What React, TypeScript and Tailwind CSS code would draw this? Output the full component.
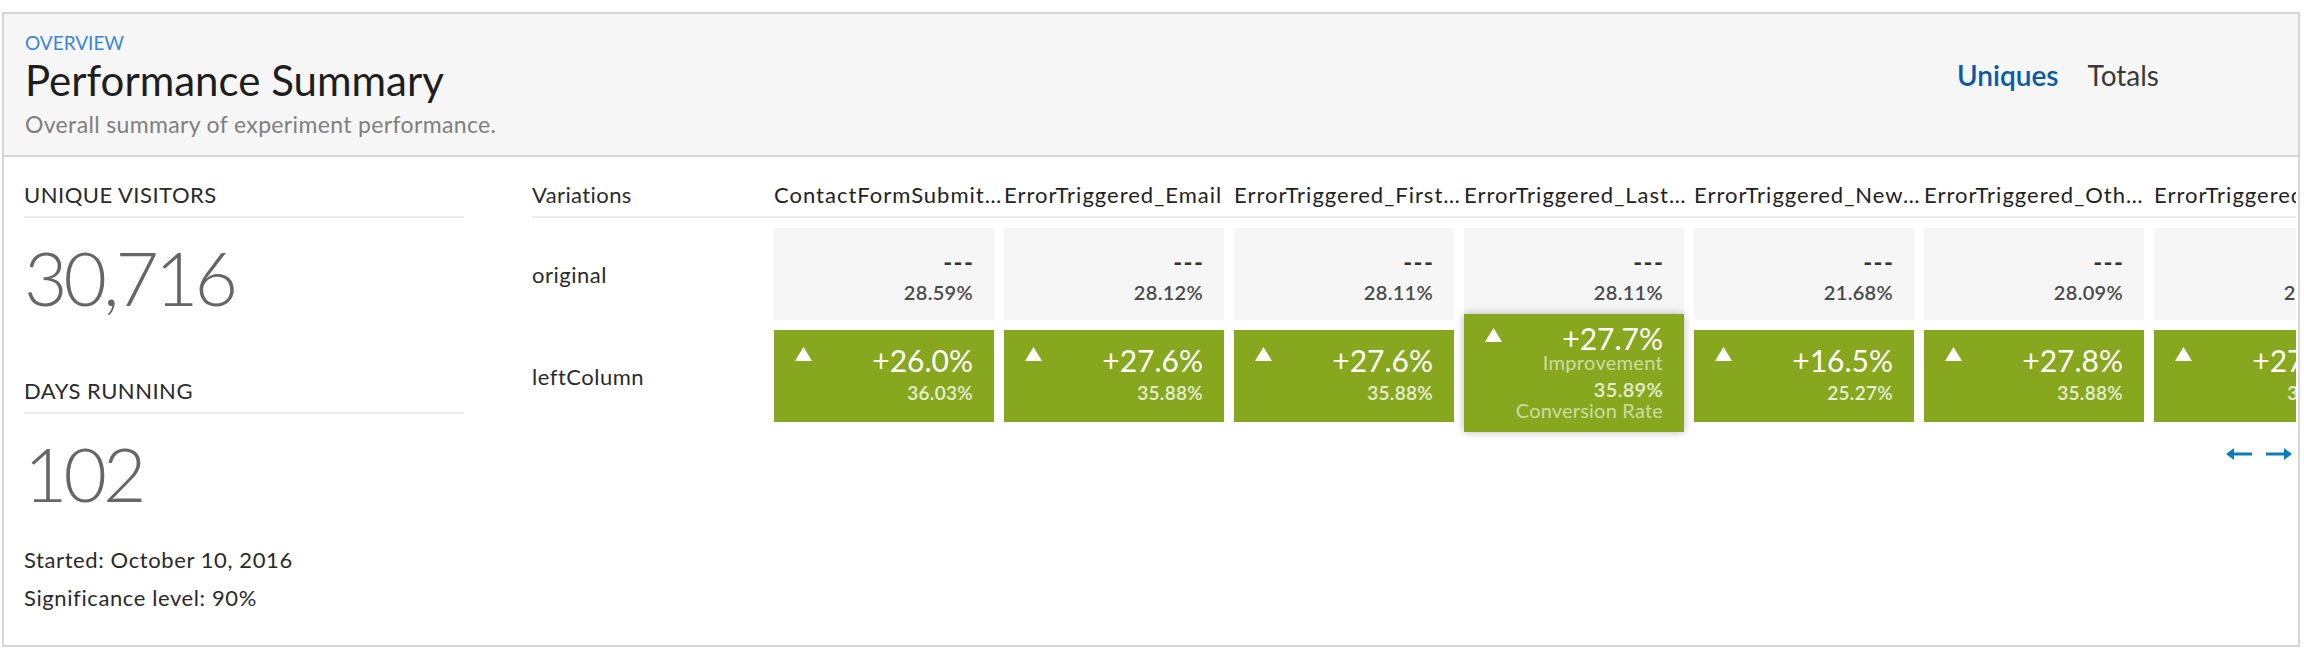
import React from 'react';

type Column = {
  name: string;
  base: string;
  lift: string;
  rate: string;
  hover?: boolean;
};

const columns: Column[] = [
  { name: 'ContactFormSubmit…', base: '28.59%', lift: '+26.0%', rate: '36.03%' },
  { name: 'ErrorTriggered_Email', base: '28.12%', lift: '+27.6%', rate: '35.88%' },
  { name: 'ErrorTriggered_First…', base: '28.11%', lift: '+27.6%', rate: '35.88%' },
  { name: 'ErrorTriggered_Last…', base: '28.11%', lift: '+27.7%', rate: '35.89%', hover: true },
  { name: 'ErrorTriggered_New…', base: '21.68%', lift: '+16.5%', rate: '25.27%' },
  { name: 'ErrorTriggered_Oth…', base: '28.09%', lift: '+27.8%', rate: '35.88%' },
  { name: 'ErrorTriggered_Phone', base: '28.10%', lift: '+27.9%', rate: '35.91%' },
];

const UpTriangle = ({ className = '' }: { className?: string }) => (
  <svg width="17" height="14" viewBox="0 0 17 14" className={`shrink-0 ${className}`}>
    <path d="M8.5 0 L17 14 H0 Z" fill="#ffffff" />
  </svg>
);

const ArrowLeft = () => (
  <svg width="26" height="14" viewBox="0 0 26 14">
    <path d="M0 7 L8 1 V5.5 H26 V8.5 H8 V13 Z" fill="#0b7dbd" />
  </svg>
);

const ArrowRight = () => (
  <svg width="26" height="14" viewBox="0 0 26 14">
    <path d="M26 7 L18 1 V5.5 H0 V8.5 H18 V13 Z" fill="#0b7dbd" />
  </svg>
);

const BaseCell = ({ value }: { value: string }) => (
  <div className="w-[220px] h-[92px] shrink-0 bg-[#f6f6f6] flex flex-col items-end pr-[21px] pt-[22px]">
    <div className="text-[24px] leading-[24px] font-bold text-[#333] tracking-[1.5px] -mr-[1.5px]">---</div>
    <div className="mt-[8px] text-[20px] leading-[20px] font-semibold text-[#4a4a4a] tracking-[0.3px]">{value}</div>
  </div>
);

const LiftCell = ({ col }: { col: Column }) => {
  if (col.hover) {
    return (
      <div className="relative w-[220px] h-[92px] shrink-0">
        {/* hovered card grows over the row and shows labels */}
        <div className="absolute -top-[16px] -bottom-[10px] left-0 right-0 z-10 bg-[#87a81e] shadow-[0_0_8px_rgba(0,0,0,0.28)] flex justify-between pl-[21px] pr-[21px] pt-[9px]">
          <UpTriangle className="mt-[5px]" />
          <div className="flex flex-col items-end">
            <div className="text-[30px] leading-[30px] text-white">{col.lift}</div>
            <div className="text-[20px] leading-[18px] text-white/60 tracking-[0.3px]">Improvement</div>
            <div className="mt-[8px] text-[20px] leading-[20px] font-semibold text-white/80 tracking-[0.3px]">{col.rate}</div>
            <div className="mt-[1px] text-[20px] leading-[20px] text-white/60 tracking-[0.2px]">Conversion Rate</div>
          </div>
        </div>
      </div>
    );
  }
  return (
    <div className="w-[220px] h-[92px] shrink-0 bg-[#87a81e] flex justify-between pl-[21px] pr-[21px] pt-[17px]">
      <UpTriangle />
      <div className="flex flex-col items-end -mt-[2px]">
        <div className="text-[30px] leading-[30px] text-white">{col.lift}</div>
        <div className="mt-[8px] text-[19px] leading-[20px] font-semibold text-white/80 tracking-[0.3px]">{col.rate}</div>
      </div>
    </div>
  );
};

export default function App() {
  return (
    <div className="w-[2304px] h-[648px] bg-white pt-[12px] pl-[2px] font-['Lato','Liberation_Sans',sans-serif]">
      <div className="w-[2298px] h-[635px] border-2 border-[#d6d6d6] flex flex-col overflow-hidden">
        {/* header */}
        <div className="h-[143px] shrink-0 bg-[#f6f6f6] border-b-2 border-[#d6d6d6] flex justify-between pl-[21px] pr-[139px]">
          <div className="pt-[19px]">
            <div className="text-[19px] leading-[19px] text-[#3a86d6]">OVERVIEW</div>
            <div className="mt-[7px] text-[42px] leading-[42px] text-[#1e1e1e]">Performance Summary</div>
            <div className="mt-[12px] text-[23px] leading-[23px] text-[#7f7f7f] tracking-[0.35px]">
              Overall summary of experiment performance.
            </div>
          </div>
          <div className="pt-[47px] flex gap-[29px] text-[28px] leading-[28px]">
            <span className="font-semibold text-[#0b5aa6]">Uniques</span>
            <span className="text-[#3a3a3a]">Totals</span>
          </div>
        </div>

        {/* body */}
        <div className="flex flex-1 min-h-0">
          {/* summary column */}
          <div className="w-[440px] shrink-0 ml-[20px] pt-[27px]">
            <div className="text-[22px] leading-[21px] tracking-[0.5px] text-[#2a2a2a] pb-[11px] border-b-2 border-[#ededed]">
              UNIQUE VISITORS
            </div>
            <div className="mt-[21px] text-[75px] leading-[76px] font-light text-[#666] tracking-[-4px]">30,716</div>
            <div className="mt-[65px] text-[22px] leading-[21px] tracking-[0.5px] text-[#2a2a2a] pb-[11px] border-b-2 border-[#ededed]">
              DAYS RUNNING
            </div>
            <div className="mt-[21px] text-[75px] leading-[76px] font-light text-[#666] tracking-[-4px]">102</div>
            <div className="mt-[30px] text-[22px] leading-[38px] tracking-[0.6px] text-[#2a2a2a]">
              <div>Started: October 10, 2016</div>
              <div>Significance level: 90%</div>
            </div>
          </div>

          {/* variations table */}
          <div className="flex-1 min-w-0 ml-[68px] mr-[2px] overflow-hidden pt-[27px]">
            <div className="flex border-b-2 border-[#ededed] pb-[11px] text-[22px] leading-[21px] text-[#222] whitespace-nowrap">
              <div className="w-[242px] shrink-0 text-[#2b2b2b] tracking-[0.4px]">Variations</div>
              <div className="flex gap-[10px] tracking-[1px]">
                {columns.map((c) => (
                  <div key={c.name} className="w-[220px] shrink-0">
                    {c.name}
                  </div>
                ))}
              </div>
            </div>

            <div className="flex items-center mt-[10px]">
              <div className="w-[242px] shrink-0 text-[22px] leading-[21px] tracking-[0.5px] text-[#2b2b2b]">original</div>
              <div className="flex gap-[10px]">
                {columns.map((c) => (
                  <BaseCell key={c.name} value={c.base} />
                ))}
              </div>
            </div>

            <div className="flex items-center mt-[10px]">
              <div className="w-[242px] shrink-0 text-[22px] leading-[21px] tracking-[0.5px] text-[#2b2b2b]">leftColumn</div>
              <div className="flex gap-[10px]">
                {columns.map((c) => (
                  <LiftCell key={c.name} col={c} />
                ))}
              </div>
            </div>

            <div className="flex justify-end gap-[14px] pr-[4px] mt-[25px]">
              <ArrowLeft />
              <ArrowRight />
            </div>
          </div>
        </div>
      </div>
    </div>
  );
}
